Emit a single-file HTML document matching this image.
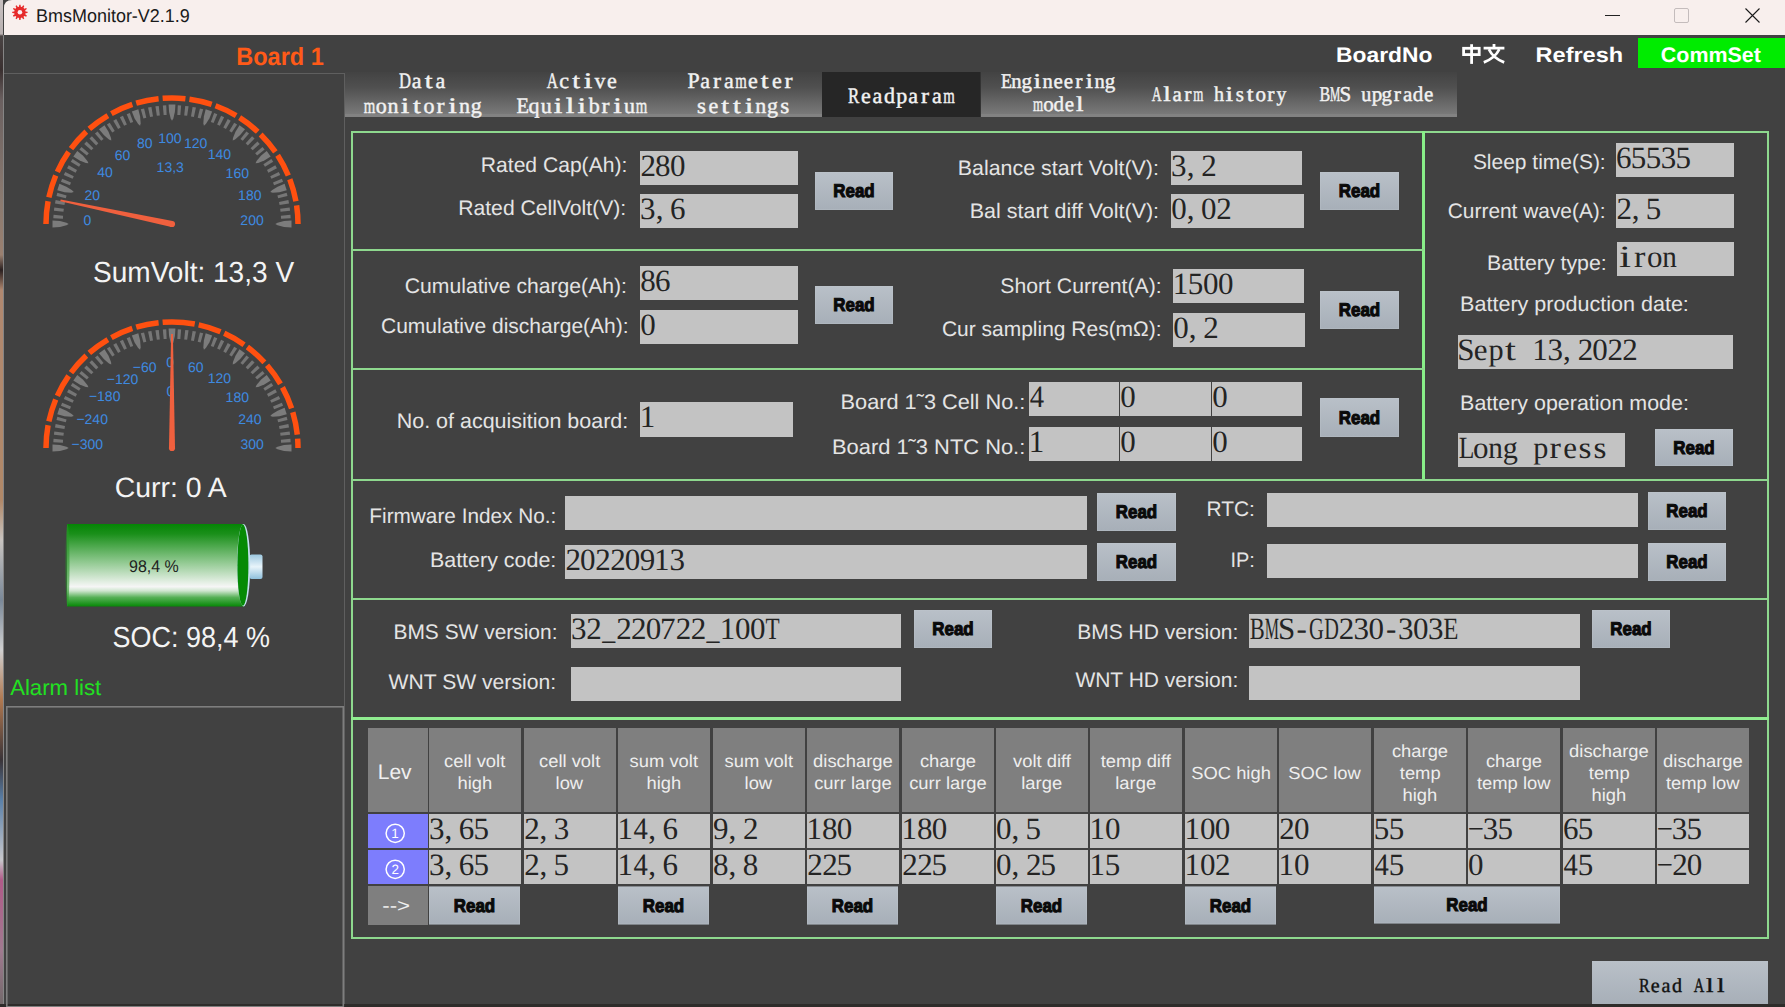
<!DOCTYPE html>
<html><head><meta charset="utf-8"><title>BmsMonitor</title>
<style>html,body{margin:0;padding:0;background:#414141;overflow:hidden}svg{display:block}</style></head>
<body><svg width="1785" height="1007" viewBox="0 0 1785 1007" text-rendering="geometricPrecision">
<defs>
<linearGradient id="tabg" x1="0" y1="0" x2="0" y2="1">
 <stop offset="0" stop-color="#434343"/><stop offset="0.35" stop-color="#505050"/><stop offset="1" stop-color="#7e7e7e"/>
</linearGradient>
<linearGradient id="btng" x1="0" y1="0" x2="0" y2="1">
 <stop offset="0" stop-color="#b9c0c8"/><stop offset="1" stop-color="#a7afb8"/>
</linearGradient>
<linearGradient id="batg" x1="0" y1="0" x2="0" y2="1">
 <stop offset="0" stop-color="#058505"/>
 <stop offset="0.12" stop-color="#1a8f1a"/>
 <stop offset="0.45" stop-color="#8cc78c"/>
 <stop offset="0.70" stop-color="#e2eee2"/>
 <stop offset="0.76" stop-color="#f6f6f6"/>
 <stop offset="0.81" stop-color="#cfe6cf"/>
 <stop offset="0.89" stop-color="#56b056"/>
 <stop offset="1" stop-color="#078807"/>
</linearGradient>
<linearGradient id="nubg" x1="0" y1="0" x2="0" y2="1">
 <stop offset="0" stop-color="#9cc8e0"/><stop offset="0.5" stop-color="#e8f4fa"/><stop offset="1" stop-color="#8fc0dc"/>
</linearGradient>
<linearGradient id="deskg" x1="0" y1="0" x2="0" y2="1">
 <stop offset="0.0000" stop-color="#c8c0c0"/> <stop offset="0.0338" stop-color="#b8b0b0"/> <stop offset="0.0357" stop-color="#4a4444"/> <stop offset="0.0695" stop-color="#3a3030"/> <stop offset="0.0993" stop-color="#6a6060"/> <stop offset="0.1986" stop-color="#8a7a70"/> <stop offset="0.2532" stop-color="#9a8070"/> <stop offset="0.2681" stop-color="#2a2020"/> <stop offset="0.2880" stop-color="#b08870"/> <stop offset="0.4965" stop-color="#b08868"/> <stop offset="0.5362" stop-color="#c8c4c0"/> <stop offset="0.5958" stop-color="#7a8898"/> <stop offset="0.6455" stop-color="#d0d0d0"/> <stop offset="0.6951" stop-color="#b07850"/> <stop offset="0.7547" stop-color="#3a3438"/> <stop offset="0.7944" stop-color="#5a80a8"/> <stop offset="0.8540" stop-color="#c8c8cc"/> <stop offset="0.8739" stop-color="#b05a88"/> <stop offset="0.9434" stop-color="#a07a90"/> <stop offset="1.0000" stop-color="#706868"/>
</linearGradient>
</defs>
<rect x="0" y="0" width="1785" height="1007" fill="#414141"/>
<rect x="0" y="0" width="3" height="1007" fill="url(#deskg)"/>
<rect x="3" y="35" width="1" height="969" fill="#858585"/>
<path d="M4 8 Q4 0 12 0 L1785 0 L1785 35 L4 35 Z" fill="#f8efed"/>
<polygon points="25.53,11.41 27.57,11.66 27.57,12.94 25.53,13.19 25.22,14.34 26.87,15.58 26.22,16.69 24.33,15.89 23.49,16.73 24.29,18.62 23.18,19.27 21.94,17.62 20.79,17.93 20.54,19.97 19.26,19.97 19.01,17.93 17.86,17.62 16.62,19.27 15.51,18.62 16.31,16.73 15.47,15.89 13.58,16.69 12.93,15.58 14.58,14.34 14.27,13.19 12.23,12.94 12.23,11.66 14.27,11.41 14.58,10.26 12.93,9.02 13.58,7.91 15.47,8.71 16.31,7.87 15.51,5.98 16.62,5.33 17.86,6.98 19.01,6.67 19.26,4.63 20.54,4.63 20.79,6.67 21.94,6.98 23.18,5.33 24.29,5.98 23.49,7.87 24.33,8.71 26.22,7.91 26.87,9.02 25.22,10.26" fill="#e62a2a"/>
<circle cx="19.9" cy="12.3" r="2.3" fill="#fbeef2"/>
<text x="36.04" y="21.80" font-family="'Liberation Sans',sans-serif" font-size="18.5" fill="#1a1a1a" textLength="153.77" lengthAdjust="spacingAndGlyphs">BmsMonitor-V2.1.9</text>
<rect x="1605" y="15" width="15" height="1" fill="#222"/>
<rect x="1674.5" y="8.5" width="14" height="14" rx="1.5" fill="none" stroke="#c4bcbc" stroke-width="1"/>
<path d="M1745.5 8.5 L1759.5 22.5 M1759.5 8.5 L1745.5 22.5" stroke="#1a1a1a" stroke-width="1.1"/>
<rect x="0" y="1004" width="1785" height="3" fill="#2e2c2a"/>
<rect x="4" y="73" width="341" height="1" fill="#5f5f5f"/>
<rect x="344" y="73" width="1" height="931" fill="#5f5f5f"/>
<rect x="6.8" y="706.8" width="336.5" height="300" fill="none" stroke="#7e7e7e" stroke-width="1.6"/>
<text x="236.25" y="64.50" font-family="'Liberation Sans',sans-serif" font-size="25" font-weight="bold" fill="#ff5a18" textLength="87.59" lengthAdjust="spacingAndGlyphs">Board 1</text>
<path d="M46 224 A126 126 0 0 1 298 224" fill="none" stroke="#ff5010" stroke-width="5.5" stroke-dasharray="22.87 4.05"/>
<polygon points="52.50,220.60 52.50,227.40 60.00,226.90 66.50,225.30 68.70,224.00 66.50,222.70 60.00,221.10" fill="#7c7c7c"/>
<polygon points="53.54,214.84 53.33,218.24 62.92,218.64 63.11,215.65" fill="#767676"/>
<polygon points="54.35,207.42 53.92,210.80 63.47,211.80 63.85,208.83" fill="#767676"/>
<polygon points="55.62,200.07 54.99,203.41 64.45,205.01 65.02,202.06" fill="#767676"/>
<polygon points="57.36,192.81 56.51,196.10 65.86,198.30 66.60,195.39" fill="#767676"/>
<polygon points="59.40,183.84 57.30,190.31 64.59,192.15 71.26,192.64 73.76,192.08 72.07,190.16 66.38,186.63" fill="#7c7c7c"/>
<polygon points="62.17,178.69 60.92,181.85 69.92,185.20 71.02,182.41" fill="#767676"/>
<polygon points="65.23,171.88 63.78,174.96 72.55,178.86 73.83,176.15" fill="#767676"/>
<polygon points="68.71,165.28 67.08,168.26 75.58,172.71 77.03,170.08" fill="#767676"/>
<polygon points="72.60,158.91 70.78,161.78 79.00,166.75 80.60,164.22" fill="#767676"/>
<polygon points="77.32,151.01 73.32,156.51 79.69,160.51 85.88,163.04 88.43,163.28 87.41,160.94 83.09,155.82" fill="#7c7c7c"/>
<polygon points="81.55,146.96 79.38,149.58 86.90,155.55 88.82,153.24" fill="#767676"/>
<polygon points="86.56,141.44 84.23,143.92 91.37,150.34 93.42,148.15" fill="#767676"/>
<polygon points="91.92,136.23 89.44,138.56 96.15,145.42 98.34,143.37" fill="#767676"/>
<polygon points="97.58,131.38 94.96,133.55 101.24,140.82 103.55,138.90" fill="#767676"/>
<polygon points="104.51,125.32 99.01,129.32 103.82,135.09 108.94,139.41 111.28,140.43 111.04,137.88 108.51,131.69" fill="#7c7c7c"/>
<polygon points="109.78,122.78 106.91,124.60 112.22,132.60 114.75,131.00" fill="#767676"/>
<polygon points="116.26,119.08 113.28,120.71 118.08,129.03 120.71,127.58" fill="#767676"/>
<polygon points="122.96,115.78 119.88,117.23 124.15,125.83 126.86,124.55" fill="#767676"/>
<polygon points="129.85,112.92 126.69,114.17 130.41,123.02 133.20,121.92" fill="#767676"/>
<polygon points="138.31,109.30 131.84,111.40 134.63,118.38 138.16,124.07 140.08,125.76 140.64,123.26 140.15,116.59" fill="#7c7c7c"/>
<polygon points="144.10,108.51 140.81,109.36 143.39,118.60 146.30,117.86" fill="#767676"/>
<polygon points="151.41,106.99 148.07,107.62 150.06,117.02 153.01,116.45" fill="#767676"/>
<polygon points="158.80,105.92 155.42,106.35 156.83,115.85 159.80,115.47" fill="#767676"/>
<polygon points="166.24,105.33 162.84,105.54 163.65,115.11 166.64,114.92" fill="#767676"/>
<polygon points="175.40,104.50 168.60,104.50 169.10,112.00 170.70,118.50 172.00,120.70 173.30,118.50 174.90,112.00" fill="#7c7c7c"/>
<polygon points="181.16,105.54 177.76,105.33 177.36,114.92 180.35,115.11" fill="#767676"/>
<polygon points="188.58,106.35 185.20,105.92 184.20,115.47 187.17,115.85" fill="#767676"/>
<polygon points="195.93,107.62 192.59,106.99 190.99,116.45 193.94,117.02" fill="#767676"/>
<polygon points="203.19,109.36 199.90,108.51 197.70,117.86 200.61,118.60" fill="#767676"/>
<polygon points="212.16,111.40 205.69,109.30 203.85,116.59 203.36,123.26 203.92,125.76 205.84,124.07 209.37,118.38" fill="#7c7c7c"/>
<polygon points="217.31,114.17 214.15,112.92 210.80,121.92 213.59,123.02" fill="#767676"/>
<polygon points="224.12,117.23 221.04,115.78 217.14,124.55 219.85,125.83" fill="#767676"/>
<polygon points="230.72,120.71 227.74,119.08 223.29,127.58 225.92,129.03" fill="#767676"/>
<polygon points="237.09,124.60 234.22,122.78 229.25,131.00 231.78,132.60" fill="#767676"/>
<polygon points="244.99,129.32 239.49,125.32 235.49,131.69 232.96,137.88 232.72,140.43 235.06,139.41 240.18,135.09" fill="#7c7c7c"/>
<polygon points="249.04,133.55 246.42,131.38 240.45,138.90 242.76,140.82" fill="#767676"/>
<polygon points="254.56,138.56 252.08,136.23 245.66,143.37 247.85,145.42" fill="#767676"/>
<polygon points="259.77,143.92 257.44,141.44 250.58,148.15 252.63,150.34" fill="#767676"/>
<polygon points="264.62,149.58 262.45,146.96 255.18,153.24 257.10,155.55" fill="#767676"/>
<polygon points="270.68,156.51 266.68,151.01 260.91,155.82 256.59,160.94 255.57,163.28 258.12,163.04 264.31,160.51" fill="#7c7c7c"/>
<polygon points="273.22,161.78 271.40,158.91 263.40,164.22 265.00,166.75" fill="#767676"/>
<polygon points="276.92,168.26 275.29,165.28 266.97,170.08 268.42,172.71" fill="#767676"/>
<polygon points="280.22,174.96 278.77,171.88 270.17,176.15 271.45,178.86" fill="#767676"/>
<polygon points="283.08,181.85 281.83,178.69 272.98,182.41 274.08,185.20" fill="#767676"/>
<polygon points="286.70,190.31 284.60,183.84 277.62,186.63 271.93,190.16 270.24,192.08 272.74,192.64 279.41,192.15" fill="#7c7c7c"/>
<polygon points="287.49,196.10 286.64,192.81 277.40,195.39 278.14,198.30" fill="#767676"/>
<polygon points="289.01,203.41 288.38,200.07 278.98,202.06 279.55,205.01" fill="#767676"/>
<polygon points="290.08,210.80 289.65,207.42 280.15,208.83 280.53,211.80" fill="#767676"/>
<polygon points="290.67,218.24 290.46,214.84 280.89,215.65 281.08,218.64" fill="#767676"/>
<polygon points="291.50,227.40 291.50,220.60 284.00,221.10 277.50,222.70 275.30,224.00 277.50,225.30 284.00,226.90" fill="#7c7c7c"/>
<text x="83.53" y="225.10" font-family="'Liberation Sans',sans-serif" font-size="14" fill="#3e8ae0" textLength="7.79" lengthAdjust="spacingAndGlyphs">0</text>
<text x="84.42" y="200.00" font-family="'Liberation Sans',sans-serif" font-size="14" fill="#3e8ae0" textLength="15.57" lengthAdjust="spacingAndGlyphs">20</text>
<text x="97.17" y="177.40" font-family="'Liberation Sans',sans-serif" font-size="14" fill="#3e8ae0" textLength="15.57" lengthAdjust="spacingAndGlyphs">40</text>
<text x="114.83" y="159.60" font-family="'Liberation Sans',sans-serif" font-size="14" fill="#3e8ae0" textLength="15.57" lengthAdjust="spacingAndGlyphs">60</text>
<text x="137.05" y="147.70" font-family="'Liberation Sans',sans-serif" font-size="14" fill="#3e8ae0" textLength="15.57" lengthAdjust="spacingAndGlyphs">80</text>
<text x="158.22" y="142.70" font-family="'Liberation Sans',sans-serif" font-size="14" fill="#3e8ae0" textLength="23.36" lengthAdjust="spacingAndGlyphs">100</text>
<text x="183.93" y="147.60" font-family="'Liberation Sans',sans-serif" font-size="14" fill="#3e8ae0" textLength="23.36" lengthAdjust="spacingAndGlyphs">120</text>
<text x="207.72" y="159.20" font-family="'Liberation Sans',sans-serif" font-size="14" fill="#3e8ae0" textLength="23.36" lengthAdjust="spacingAndGlyphs">140</text>
<text x="225.62" y="178.20" font-family="'Liberation Sans',sans-serif" font-size="14" fill="#3e8ae0" textLength="23.36" lengthAdjust="spacingAndGlyphs">160</text>
<text x="238.12" y="200.20" font-family="'Liberation Sans',sans-serif" font-size="14" fill="#3e8ae0" textLength="23.36" lengthAdjust="spacingAndGlyphs">180</text>
<text x="240.35" y="225.35" font-family="'Liberation Sans',sans-serif" font-size="14" fill="#3e8ae0" textLength="23.36" lengthAdjust="spacingAndGlyphs">200</text>
<text x="156.62" y="171.50" font-family="'Liberation Sans',sans-serif" font-size="14" fill="#3e8ae0" textLength="27.25" lengthAdjust="spacingAndGlyphs">13,3</text>
<path d="M172.62 221.07 L60.67 199.48 L60.29 201.24 L171.38 226.93 Z" fill="#f0603e"/>
<circle cx="172" cy="224" r="3.1" fill="#f0603e"/>
<path d="M46 448 A126 126 0 0 1 172 322" fill="none" stroke="#ff5010" stroke-width="5.5" stroke-dasharray="22.87 4.05"/>
<path d="M172 322 A126 126 0 0 1 298 448" fill="none" stroke="#ff5010" stroke-width="5.5" stroke-dasharray="22.87 4.05"/>
<polygon points="52.50,444.60 52.50,451.40 60.00,450.90 66.50,449.30 68.70,448.00 66.50,446.70 60.00,445.10" fill="#7c7c7c"/>
<polygon points="53.54,438.84 53.33,442.24 62.92,442.64 63.11,439.65" fill="#767676"/>
<polygon points="54.35,431.42 53.92,434.80 63.47,435.80 63.85,432.83" fill="#767676"/>
<polygon points="55.62,424.07 54.99,427.41 64.45,429.01 65.02,426.06" fill="#767676"/>
<polygon points="57.36,416.81 56.51,420.10 65.86,422.30 66.60,419.39" fill="#767676"/>
<polygon points="59.40,407.84 57.30,414.31 64.59,416.15 71.26,416.64 73.76,416.08 72.07,414.16 66.38,410.63" fill="#7c7c7c"/>
<polygon points="62.17,402.69 60.92,405.85 69.92,409.20 71.02,406.41" fill="#767676"/>
<polygon points="65.23,395.88 63.78,398.96 72.55,402.86 73.83,400.15" fill="#767676"/>
<polygon points="68.71,389.28 67.08,392.26 75.58,396.71 77.03,394.08" fill="#767676"/>
<polygon points="72.60,382.91 70.78,385.78 79.00,390.75 80.60,388.22" fill="#767676"/>
<polygon points="77.32,375.01 73.32,380.51 79.69,384.51 85.88,387.04 88.43,387.28 87.41,384.94 83.09,379.82" fill="#7c7c7c"/>
<polygon points="81.55,370.96 79.38,373.58 86.90,379.55 88.82,377.24" fill="#767676"/>
<polygon points="86.56,365.44 84.23,367.92 91.37,374.34 93.42,372.15" fill="#767676"/>
<polygon points="91.92,360.23 89.44,362.56 96.15,369.42 98.34,367.37" fill="#767676"/>
<polygon points="97.58,355.38 94.96,357.55 101.24,364.82 103.55,362.90" fill="#767676"/>
<polygon points="104.51,349.32 99.01,353.32 103.82,359.09 108.94,363.41 111.28,364.43 111.04,361.88 108.51,355.69" fill="#7c7c7c"/>
<polygon points="109.78,346.78 106.91,348.60 112.22,356.60 114.75,355.00" fill="#767676"/>
<polygon points="116.26,343.08 113.28,344.71 118.08,353.03 120.71,351.58" fill="#767676"/>
<polygon points="122.96,339.78 119.88,341.23 124.15,349.83 126.86,348.55" fill="#767676"/>
<polygon points="129.85,336.92 126.69,338.17 130.41,347.02 133.20,345.92" fill="#767676"/>
<polygon points="138.31,333.30 131.84,335.40 134.63,342.38 138.16,348.07 140.08,349.76 140.64,347.26 140.15,340.59" fill="#7c7c7c"/>
<polygon points="144.10,332.51 140.81,333.36 143.39,342.60 146.30,341.86" fill="#767676"/>
<polygon points="151.41,330.99 148.07,331.62 150.06,341.02 153.01,340.45" fill="#767676"/>
<polygon points="158.80,329.92 155.42,330.35 156.83,339.85 159.80,339.47" fill="#767676"/>
<polygon points="166.24,329.33 162.84,329.54 163.65,339.11 166.64,338.92" fill="#767676"/>
<polygon points="175.40,328.50 168.60,328.50 169.10,336.00 170.70,342.50 172.00,344.70 173.30,342.50 174.90,336.00" fill="#7c7c7c"/>
<polygon points="181.16,329.54 177.76,329.33 177.36,338.92 180.35,339.11" fill="#767676"/>
<polygon points="188.58,330.35 185.20,329.92 184.20,339.47 187.17,339.85" fill="#767676"/>
<polygon points="195.93,331.62 192.59,330.99 190.99,340.45 193.94,341.02" fill="#767676"/>
<polygon points="203.19,333.36 199.90,332.51 197.70,341.86 200.61,342.60" fill="#767676"/>
<polygon points="212.16,335.40 205.69,333.30 203.85,340.59 203.36,347.26 203.92,349.76 205.84,348.07 209.37,342.38" fill="#7c7c7c"/>
<polygon points="217.31,338.17 214.15,336.92 210.80,345.92 213.59,347.02" fill="#767676"/>
<polygon points="224.12,341.23 221.04,339.78 217.14,348.55 219.85,349.83" fill="#767676"/>
<polygon points="230.72,344.71 227.74,343.08 223.29,351.58 225.92,353.03" fill="#767676"/>
<polygon points="237.09,348.60 234.22,346.78 229.25,355.00 231.78,356.60" fill="#767676"/>
<polygon points="244.99,353.32 239.49,349.32 235.49,355.69 232.96,361.88 232.72,364.43 235.06,363.41 240.18,359.09" fill="#7c7c7c"/>
<polygon points="249.04,357.55 246.42,355.38 240.45,362.90 242.76,364.82" fill="#767676"/>
<polygon points="254.56,362.56 252.08,360.23 245.66,367.37 247.85,369.42" fill="#767676"/>
<polygon points="259.77,367.92 257.44,365.44 250.58,372.15 252.63,374.34" fill="#767676"/>
<polygon points="264.62,373.58 262.45,370.96 255.18,377.24 257.10,379.55" fill="#767676"/>
<polygon points="270.68,380.51 266.68,375.01 260.91,379.82 256.59,384.94 255.57,387.28 258.12,387.04 264.31,384.51" fill="#7c7c7c"/>
<polygon points="273.22,385.78 271.40,382.91 263.40,388.22 265.00,390.75" fill="#767676"/>
<polygon points="276.92,392.26 275.29,389.28 266.97,394.08 268.42,396.71" fill="#767676"/>
<polygon points="280.22,398.96 278.77,395.88 270.17,400.15 271.45,402.86" fill="#767676"/>
<polygon points="283.08,405.85 281.83,402.69 272.98,406.41 274.08,409.20" fill="#767676"/>
<polygon points="286.70,414.31 284.60,407.84 277.62,410.63 271.93,414.16 270.24,416.08 272.74,416.64 279.41,416.15" fill="#7c7c7c"/>
<polygon points="287.49,420.10 286.64,416.81 277.40,419.39 278.14,422.30" fill="#767676"/>
<polygon points="289.01,427.41 288.38,424.07 278.98,426.06 279.55,429.01" fill="#767676"/>
<polygon points="290.08,434.80 289.65,431.42 280.15,432.83 280.53,435.80" fill="#767676"/>
<polygon points="290.67,442.24 290.46,438.84 280.89,439.65 281.08,442.64" fill="#767676"/>
<polygon points="291.50,451.40 291.50,444.60 284.00,445.10 277.50,446.70 275.30,448.00 277.50,449.30 284.00,450.90" fill="#7c7c7c"/>
<text x="71.53" y="449.10" font-family="'Liberation Sans',sans-serif" font-size="14" fill="#3e8ae0" textLength="31.53" lengthAdjust="spacingAndGlyphs">−300</text>
<text x="76.42" y="424.00" font-family="'Liberation Sans',sans-serif" font-size="14" fill="#3e8ae0" textLength="31.53" lengthAdjust="spacingAndGlyphs">−240</text>
<text x="88.92" y="401.40" font-family="'Liberation Sans',sans-serif" font-size="14" fill="#3e8ae0" textLength="31.53" lengthAdjust="spacingAndGlyphs">−180</text>
<text x="106.83" y="383.60" font-family="'Liberation Sans',sans-serif" font-size="14" fill="#3e8ae0" textLength="31.53" lengthAdjust="spacingAndGlyphs">−120</text>
<text x="132.80" y="371.70" font-family="'Liberation Sans',sans-serif" font-size="14" fill="#3e8ae0" textLength="23.75" lengthAdjust="spacingAndGlyphs">−60</text>
<text x="166.22" y="366.70" font-family="'Liberation Sans',sans-serif" font-size="14" fill="#3e8ae0" textLength="7.79" lengthAdjust="spacingAndGlyphs">0</text>
<text x="187.93" y="371.60" font-family="'Liberation Sans',sans-serif" font-size="14" fill="#3e8ae0" textLength="15.57" lengthAdjust="spacingAndGlyphs">60</text>
<text x="207.72" y="383.20" font-family="'Liberation Sans',sans-serif" font-size="14" fill="#3e8ae0" textLength="23.36" lengthAdjust="spacingAndGlyphs">120</text>
<text x="225.62" y="402.20" font-family="'Liberation Sans',sans-serif" font-size="14" fill="#3e8ae0" textLength="23.36" lengthAdjust="spacingAndGlyphs">180</text>
<text x="238.25" y="424.20" font-family="'Liberation Sans',sans-serif" font-size="14" fill="#3e8ae0" textLength="23.36" lengthAdjust="spacingAndGlyphs">240</text>
<text x="240.47" y="449.35" font-family="'Liberation Sans',sans-serif" font-size="14" fill="#3e8ae0" textLength="23.36" lengthAdjust="spacingAndGlyphs">300</text>
<text x="166.62" y="395.60" font-family="'Liberation Sans',sans-serif" font-size="14" fill="#3e8ae0" textLength="7.79" lengthAdjust="spacingAndGlyphs">0</text>
<path d="M175.00 448.00 L172.90 334.00 L171.10 334.00 L169.00 448.00 Z" fill="#f0603e"/>
<circle cx="172" cy="448" r="3.1" fill="#f0603e"/>
<text x="92.99" y="282.20" font-family="'Liberation Sans',sans-serif" font-size="29" fill="#f4f4f4" textLength="201.12" lengthAdjust="spacingAndGlyphs">SumVolt: 13,3 V</text>
<text x="114.78" y="497.00" font-family="'Liberation Sans',sans-serif" font-size="28" fill="#f4f4f4" textLength="111.97" lengthAdjust="spacingAndGlyphs">Curr: 0 A</text>
<rect x="67" y="524" width="177" height="82.5" fill="url(#batg)"/>
<ellipse cx="67.5" cy="565.2" rx="2" ry="41.2" fill="#2a962a" opacity="0.6"/>
<rect x="249.5" y="554.5" width="13" height="24.5" rx="2" fill="url(#nubg)"/>
<ellipse cx="243.6" cy="565.2" rx="6.6" ry="41.3" fill="#c4e2f0"/>
<ellipse cx="242.9" cy="565.2" rx="5.5" ry="40.6" fill="#058a05"/>
<text x="129.00" y="571.50" font-family="'Liberation Sans',sans-serif" font-size="17" fill="#1e1e1e" textLength="49.74" lengthAdjust="spacingAndGlyphs">98,4 %</text>
<text x="112.54" y="646.90" font-family="'Liberation Sans',sans-serif" font-size="29" fill="#f4f4f4" textLength="157.39" lengthAdjust="spacingAndGlyphs">SOC: 98,4 %</text>
<text x="10.20" y="695.30" font-family="'Liberation Sans',sans-serif" font-size="22" fill="#22e022" textLength="91.00" lengthAdjust="spacingAndGlyphs">Alarm list</text>
<text x="1336.14" y="61.60" font-family="'Liberation Sans',sans-serif" font-size="21" font-weight="bold" fill="#ffffff" textLength="96.25" lengthAdjust="spacingAndGlyphs">BoardNo</text>
<g stroke="#ffffff" stroke-width="2.8" fill="none" stroke-linecap="butt"><rect x="1463.6" y="48.3" width="15.6" height="6.3"/><path d="M1471.6 44.2 V63.9"/><path d="M1494 44 V48 M1483.6 48.1 H1504.4 M1489 49.5 Q1493 58 1504.2 62.4 M1499.2 49.5 Q1495 58 1483.8 62.4"/></g>
<text x="1535.60" y="62.00" font-family="'Liberation Sans',sans-serif" font-size="21" font-weight="bold" fill="#ffffff" textLength="87.52" lengthAdjust="spacingAndGlyphs">Refresh</text>
<rect x="1638" y="38" width="147" height="30" fill="#00ec00"/>
<text x="1660.83" y="62.00" font-family="'Liberation Sans',sans-serif" font-size="21" font-weight="bold" fill="#ffffff" textLength="100.04" lengthAdjust="spacingAndGlyphs">CommSet</text>
<rect x="345" y="72" width="1112" height="45" fill="url(#tabg)"/>
<rect x="345" y="114" width="1112" height="3" fill="#828282"/>
<rect x="822" y="72" width="158" height="45" fill="#262626"/>
<rect x="980" y="72" width="1" height="45" fill="#333333"/>
<g stroke="#f2f2f2" stroke-width="0.45"><text x="399.10" y="87.70" font-family="'Liberation Serif',serif" font-size="22" fill="#f2f2f2" textLength="12.00" lengthAdjust="spacingAndGlyphs">D</text><text x="411.72" y="87.70" font-family="'Liberation Serif',serif" font-size="22" fill="#f2f2f2">a</text><text x="424.74" y="87.70" font-family="'Liberation Serif',serif" font-size="22" fill="#f2f2f2" textLength="7.84" lengthAdjust="spacingAndGlyphs">t</text><text x="435.52" y="87.70" font-family="'Liberation Serif',serif" font-size="22" fill="#f2f2f2">a</text></g>
<g stroke="#f2f2f2" stroke-width="0.45"><text x="363.64" y="113.00" font-family="'Liberation Serif',serif" font-size="22" fill="#f2f2f2" textLength="11.53" lengthAdjust="spacingAndGlyphs">m</text><text x="375.85" y="113.00" font-family="'Liberation Serif',serif" font-size="22" fill="#f2f2f2">o</text><text x="387.62" y="113.00" font-family="'Liberation Serif',serif" font-size="22" fill="#f2f2f2">n</text><text x="400.76" y="113.00" font-family="'Liberation Serif',serif" font-size="22" fill="#f2f2f2" textLength="8.59" lengthAdjust="spacingAndGlyphs">i</text><text x="413.04" y="113.00" font-family="'Liberation Serif',serif" font-size="22" fill="#f2f2f2" textLength="7.84" lengthAdjust="spacingAndGlyphs">t</text><text x="423.45" y="113.00" font-family="'Liberation Serif',serif" font-size="22" fill="#f2f2f2">o</text><text x="436.61" y="113.00" font-family="'Liberation Serif',serif" font-size="22" fill="#f2f2f2" textLength="8.01" lengthAdjust="spacingAndGlyphs">r</text><text x="448.36" y="113.00" font-family="'Liberation Serif',serif" font-size="22" fill="#f2f2f2" textLength="8.59" lengthAdjust="spacingAndGlyphs">i</text><text x="459.02" y="113.00" font-family="'Liberation Serif',serif" font-size="22" fill="#f2f2f2">n</text><text x="470.80" y="113.00" font-family="'Liberation Serif',serif" font-size="22" fill="#f2f2f2">g</text></g>
<g stroke="#f2f2f2" stroke-width="0.45"><text x="546.80" y="87.50" font-family="'Liberation Serif',serif" font-size="22" fill="#f2f2f2" textLength="11.22" lengthAdjust="spacingAndGlyphs">A</text><text x="559.35" y="87.50" font-family="'Liberation Serif',serif" font-size="22" fill="#f2f2f2">c</text><text x="572.24" y="87.50" font-family="'Liberation Serif',serif" font-size="22" fill="#f2f2f2" textLength="7.84" lengthAdjust="spacingAndGlyphs">t</text><text x="583.76" y="87.50" font-family="'Liberation Serif',serif" font-size="22" fill="#f2f2f2" textLength="8.59" lengthAdjust="spacingAndGlyphs">i</text><text x="594.58" y="87.50" font-family="'Liberation Serif',serif" font-size="22" fill="#f2f2f2" textLength="10.95" lengthAdjust="spacingAndGlyphs">v</text><text x="607.08" y="87.50" font-family="'Liberation Serif',serif" font-size="22" fill="#f2f2f2">e</text></g>
<g stroke="#f2f2f2" stroke-width="0.45"><text x="516.51" y="113.00" font-family="'Liberation Serif',serif" font-size="22" fill="#f2f2f2" textLength="12.52" lengthAdjust="spacingAndGlyphs">E</text><text x="528.60" y="113.00" font-family="'Liberation Serif',serif" font-size="22" fill="#f2f2f2">q</text><text x="540.75" y="113.00" font-family="'Liberation Serif',serif" font-size="22" fill="#f2f2f2">u</text><text x="553.76" y="113.00" font-family="'Liberation Serif',serif" font-size="22" fill="#f2f2f2" textLength="8.59" lengthAdjust="spacingAndGlyphs">i</text><text x="565.66" y="113.00" font-family="'Liberation Serif',serif" font-size="22" fill="#f2f2f2" textLength="8.59" lengthAdjust="spacingAndGlyphs">l</text><text x="577.56" y="113.00" font-family="'Liberation Serif',serif" font-size="22" fill="#f2f2f2" textLength="8.59" lengthAdjust="spacingAndGlyphs">i</text><text x="588.73" y="113.00" font-family="'Liberation Serif',serif" font-size="22" fill="#f2f2f2">b</text><text x="601.51" y="113.00" font-family="'Liberation Serif',serif" font-size="22" fill="#f2f2f2" textLength="8.01" lengthAdjust="spacingAndGlyphs">r</text><text x="613.26" y="113.00" font-family="'Liberation Serif',serif" font-size="22" fill="#f2f2f2" textLength="8.59" lengthAdjust="spacingAndGlyphs">i</text><text x="624.05" y="113.00" font-family="'Liberation Serif',serif" font-size="22" fill="#f2f2f2">u</text><text x="635.64" y="113.00" font-family="'Liberation Serif',serif" font-size="22" fill="#f2f2f2" textLength="11.53" lengthAdjust="spacingAndGlyphs">m</text></g>
<g stroke="#f2f2f2" stroke-width="0.45"><text x="687.48" y="87.50" font-family="'Liberation Serif',serif" font-size="22" fill="#f2f2f2" textLength="12.18" lengthAdjust="spacingAndGlyphs">P</text><text x="700.23" y="87.50" font-family="'Liberation Serif',serif" font-size="22" fill="#f2f2f2">a</text><text x="713.01" y="87.50" font-family="'Liberation Serif',serif" font-size="22" fill="#f2f2f2" textLength="8.01" lengthAdjust="spacingAndGlyphs">r</text><text x="724.03" y="87.50" font-family="'Liberation Serif',serif" font-size="22" fill="#f2f2f2">a</text><text x="735.24" y="87.50" font-family="'Liberation Serif',serif" font-size="22" fill="#f2f2f2" textLength="11.53" lengthAdjust="spacingAndGlyphs">m</text><text x="748.08" y="87.50" font-family="'Liberation Serif',serif" font-size="22" fill="#f2f2f2">e</text><text x="760.84" y="87.50" font-family="'Liberation Serif',serif" font-size="22" fill="#f2f2f2" textLength="7.84" lengthAdjust="spacingAndGlyphs">t</text><text x="771.88" y="87.50" font-family="'Liberation Serif',serif" font-size="22" fill="#f2f2f2">e</text><text x="784.41" y="87.50" font-family="'Liberation Serif',serif" font-size="22" fill="#f2f2f2" textLength="8.01" lengthAdjust="spacingAndGlyphs">r</text></g>
<g stroke="#f2f2f2" stroke-width="0.45"><text x="696.97" y="113.00" font-family="'Liberation Serif',serif" font-size="22" fill="#f2f2f2" textLength="9.02" lengthAdjust="spacingAndGlyphs">s</text><text x="708.48" y="113.00" font-family="'Liberation Serif',serif" font-size="22" fill="#f2f2f2">e</text><text x="721.24" y="113.00" font-family="'Liberation Serif',serif" font-size="22" fill="#f2f2f2" textLength="7.84" lengthAdjust="spacingAndGlyphs">t</text><text x="733.14" y="113.00" font-family="'Liberation Serif',serif" font-size="22" fill="#f2f2f2" textLength="7.84" lengthAdjust="spacingAndGlyphs">t</text><text x="744.66" y="113.00" font-family="'Liberation Serif',serif" font-size="22" fill="#f2f2f2" textLength="8.59" lengthAdjust="spacingAndGlyphs">i</text><text x="755.33" y="113.00" font-family="'Liberation Serif',serif" font-size="22" fill="#f2f2f2">n</text><text x="767.10" y="113.00" font-family="'Liberation Serif',serif" font-size="22" fill="#f2f2f2">g</text><text x="780.27" y="113.00" font-family="'Liberation Serif',serif" font-size="22" fill="#f2f2f2" textLength="9.02" lengthAdjust="spacingAndGlyphs">s</text></g>
<g stroke="#f2f2f2" stroke-width="0.45"><text x="848.09" y="102.60" font-family="'Liberation Serif',serif" font-size="22" fill="#f2f2f2" textLength="11.28" lengthAdjust="spacingAndGlyphs">R</text><text x="860.98" y="102.60" font-family="'Liberation Serif',serif" font-size="22" fill="#f2f2f2">e</text><text x="872.62" y="102.60" font-family="'Liberation Serif',serif" font-size="22" fill="#f2f2f2">a</text><text x="883.90" y="102.60" font-family="'Liberation Serif',serif" font-size="22" fill="#f2f2f2">d</text><text x="896.30" y="102.60" font-family="'Liberation Serif',serif" font-size="22" fill="#f2f2f2">p</text><text x="908.33" y="102.60" font-family="'Liberation Serif',serif" font-size="22" fill="#f2f2f2">a</text><text x="921.11" y="102.60" font-family="'Liberation Serif',serif" font-size="22" fill="#f2f2f2" textLength="8.01" lengthAdjust="spacingAndGlyphs">r</text><text x="932.12" y="102.60" font-family="'Liberation Serif',serif" font-size="22" fill="#f2f2f2">a</text><text x="943.34" y="102.60" font-family="'Liberation Serif',serif" font-size="22" fill="#f2f2f2" textLength="11.53" lengthAdjust="spacingAndGlyphs">m</text></g>
<g stroke="#f2f2f2" stroke-width="0.45"><text x="1000.99" y="87.90" font-family="'Liberation Serif',serif" font-size="21" fill="#f2f2f2" textLength="10.91" lengthAdjust="spacingAndGlyphs">E</text><text x="1011.33" y="87.90" font-family="'Liberation Serif',serif" font-size="21" fill="#f2f2f2" textLength="10.30" lengthAdjust="spacingAndGlyphs">n</text><text x="1021.50" y="87.90" font-family="'Liberation Serif',serif" font-size="21" fill="#f2f2f2">g</text><text x="1033.53" y="87.90" font-family="'Liberation Serif',serif" font-size="21" fill="#f2f2f2" textLength="7.53" lengthAdjust="spacingAndGlyphs">i</text><text x="1042.53" y="87.90" font-family="'Liberation Serif',serif" font-size="21" fill="#f2f2f2" textLength="10.30" lengthAdjust="spacingAndGlyphs">n</text><text x="1053.45" y="87.90" font-family="'Liberation Serif',serif" font-size="21" fill="#f2f2f2">e</text><text x="1063.85" y="87.90" font-family="'Liberation Serif',serif" font-size="21" fill="#f2f2f2">e</text><text x="1075.26" y="87.90" font-family="'Liberation Serif',serif" font-size="21" fill="#f2f2f2" textLength="7.21" lengthAdjust="spacingAndGlyphs">r</text><text x="1085.53" y="87.90" font-family="'Liberation Serif',serif" font-size="21" fill="#f2f2f2" textLength="7.53" lengthAdjust="spacingAndGlyphs">i</text><text x="1094.53" y="87.90" font-family="'Liberation Serif',serif" font-size="21" fill="#f2f2f2" textLength="10.30" lengthAdjust="spacingAndGlyphs">n</text><text x="1104.70" y="87.90" font-family="'Liberation Serif',serif" font-size="21" fill="#f2f2f2">g</text></g>
<g stroke="#f2f2f2" stroke-width="0.45"><text x="1033.11" y="111.10" font-family="'Liberation Serif',serif" font-size="21" fill="#f2f2f2" textLength="10.08" lengthAdjust="spacingAndGlyphs">m</text><text x="1043.35" y="111.10" font-family="'Liberation Serif',serif" font-size="21" fill="#f2f2f2">o</text><text x="1053.50" y="111.10" font-family="'Liberation Serif',serif" font-size="21" fill="#f2f2f2">d</text><text x="1064.65" y="111.10" font-family="'Liberation Serif',serif" font-size="21" fill="#f2f2f2">e</text><text x="1075.93" y="111.10" font-family="'Liberation Serif',serif" font-size="21" fill="#f2f2f2" textLength="7.53" lengthAdjust="spacingAndGlyphs">l</text></g>
<g stroke="#f2f2f2" stroke-width="0.45"><text x="1151.75" y="101.00" font-family="'Liberation Serif',serif" font-size="21" fill="#f2f2f2" textLength="9.84" lengthAdjust="spacingAndGlyphs">A</text><text x="1163.23" y="101.00" font-family="'Liberation Serif',serif" font-size="21" fill="#f2f2f2" textLength="7.53" lengthAdjust="spacingAndGlyphs">l</text><text x="1172.62" y="101.00" font-family="'Liberation Serif',serif" font-size="21" fill="#f2f2f2">a</text><text x="1184.16" y="101.00" font-family="'Liberation Serif',serif" font-size="21" fill="#f2f2f2" textLength="7.21" lengthAdjust="spacingAndGlyphs">r</text><text x="1193.21" y="101.00" font-family="'Liberation Serif',serif" font-size="21" fill="#f2f2f2" textLength="10.08" lengthAdjust="spacingAndGlyphs">m</text><text x="1214.08" y="101.00" font-family="'Liberation Serif',serif" font-size="21" fill="#f2f2f2" textLength="10.05" lengthAdjust="spacingAndGlyphs">h</text><text x="1225.63" y="101.00" font-family="'Liberation Serif',serif" font-size="21" fill="#f2f2f2" textLength="7.53" lengthAdjust="spacingAndGlyphs">i</text><text x="1235.78" y="101.00" font-family="'Liberation Serif',serif" font-size="21" fill="#f2f2f2">s</text><text x="1246.78" y="101.00" font-family="'Liberation Serif',serif" font-size="21" fill="#f2f2f2" textLength="6.84" lengthAdjust="spacingAndGlyphs">t</text><text x="1255.45" y="101.00" font-family="'Liberation Serif',serif" font-size="21" fill="#f2f2f2">o</text><text x="1267.36" y="101.00" font-family="'Liberation Serif',serif" font-size="21" fill="#f2f2f2" textLength="7.21" lengthAdjust="spacingAndGlyphs">r</text><text x="1276.48" y="101.00" font-family="'Liberation Serif',serif" font-size="21" fill="#f2f2f2" textLength="9.80" lengthAdjust="spacingAndGlyphs">y</text></g>
<g stroke="#f2f2f2" stroke-width="0.45"><text x="1319.53" y="101.00" font-family="'Liberation Serif',serif" font-size="21" fill="#f2f2f2" textLength="10.72" lengthAdjust="spacingAndGlyphs">B</text><text x="1330.04" y="101.00" font-family="'Liberation Serif',serif" font-size="21" fill="#f2f2f2" textLength="10.21" lengthAdjust="spacingAndGlyphs">M</text><text x="1339.62" y="101.00" font-family="'Liberation Serif',serif" font-size="21" fill="#f2f2f2">S</text><text x="1361.28" y="101.00" font-family="'Liberation Serif',serif" font-size="21" fill="#f2f2f2" textLength="10.05" lengthAdjust="spacingAndGlyphs">u</text><text x="1371.70" y="101.00" font-family="'Liberation Serif',serif" font-size="21" fill="#f2f2f2">p</text><text x="1381.60" y="101.00" font-family="'Liberation Serif',serif" font-size="21" fill="#f2f2f2">g</text><text x="1393.76" y="101.00" font-family="'Liberation Serif',serif" font-size="21" fill="#f2f2f2" textLength="7.21" lengthAdjust="spacingAndGlyphs">r</text><text x="1403.03" y="101.00" font-family="'Liberation Serif',serif" font-size="21" fill="#f2f2f2">a</text><text x="1412.80" y="101.00" font-family="'Liberation Serif',serif" font-size="21" fill="#f2f2f2">d</text><text x="1423.95" y="101.00" font-family="'Liberation Serif',serif" font-size="21" fill="#f2f2f2">e</text></g>
<rect x="351" y="131" width="1418" height="2" fill="#8ed88e"/>
<rect x="351" y="131" width="2" height="808" fill="#8ed88e"/>
<rect x="1767" y="131" width="2" height="808" fill="#8ed88e"/>
<rect x="1422" y="131" width="3" height="350" fill="#88ee88"/>
<rect x="351" y="249" width="1073" height="2" fill="#8ed88e"/>
<rect x="351" y="368" width="1073" height="2" fill="#8ed88e"/>
<rect x="351" y="479" width="1418" height="2" fill="#8ed88e"/>
<rect x="351" y="598" width="1418" height="2" fill="#8ed88e"/>
<rect x="351" y="717" width="1418" height="3" fill="#90ec90"/>
<rect x="351" y="937" width="1418" height="2" fill="#8ed88e"/>
<text x="480.84" y="171.60" font-family="'Liberation Sans',sans-serif" font-size="21" fill="#e4e4e4" textLength="146.47" lengthAdjust="spacingAndGlyphs">Rated Cap(Ah):</text>
<text x="458.24" y="214.80" font-family="'Liberation Sans',sans-serif" font-size="21" fill="#e4e4e4" textLength="167.98" lengthAdjust="spacingAndGlyphs">Rated CellVolt(V):</text>
<rect x="640" y="151" width="158" height="34" fill="#c3c3c3"/><text x="640.45" y="176.40" font-family="'Liberation Serif',serif" font-size="31" fill="#242424">2</text><text x="655.10" y="176.40" font-family="'Liberation Serif',serif" font-size="31" fill="#242424">8</text><text x="670.00" y="176.40" font-family="'Liberation Serif',serif" font-size="31" fill="#242424">0</text>
<rect x="640" y="194" width="158" height="34" fill="#c3c3c3"/><text x="640.08" y="219.40" font-family="'Liberation Serif',serif" font-size="31" fill="#242424">3</text><text x="655.65" y="219.40" font-family="'Liberation Serif',serif" font-size="31" fill="#242424">,</text><text x="669.88" y="219.40" font-family="'Liberation Serif',serif" font-size="31" fill="#242424">6</text>
<rect x="815" y="172" width="78" height="38" fill="url(#btng)"/><rect x="815.5" y="172.5" width="77" height="37" fill="none" stroke="#c0c7ce" stroke-width="1" opacity="0.3"/><text x="833.36" y="197.40" font-family="'Liberation Sans',sans-serif" font-size="18.5" font-weight="bold" fill="#0a0a0a" textLength="41.27" lengthAdjust="spacingAndGlyphs" stroke="#0a0a0a" stroke-width="1.1">Read</text>
<text x="957.72" y="175.00" font-family="'Liberation Sans',sans-serif" font-size="21" fill="#e4e4e4" textLength="201.18" lengthAdjust="spacingAndGlyphs">Balance start Volt(V):</text>
<text x="969.81" y="218.00" font-family="'Liberation Sans',sans-serif" font-size="21" fill="#e4e4e4" textLength="189.28" lengthAdjust="spacingAndGlyphs">Bal start diff Volt(V):</text>
<rect x="1171" y="151" width="131" height="34" fill="#c3c3c3"/><text x="1171.08" y="176.40" font-family="'Liberation Serif',serif" font-size="31" fill="#242424">3</text><text x="1186.65" y="176.40" font-family="'Liberation Serif',serif" font-size="31" fill="#242424">,</text><text x="1201.25" y="176.40" font-family="'Liberation Serif',serif" font-size="31" fill="#242424">2</text>
<rect x="1171" y="194" width="133" height="34" fill="#c3c3c3"/><text x="1171.20" y="219.40" font-family="'Liberation Serif',serif" font-size="31" fill="#242424">0</text><text x="1186.65" y="219.40" font-family="'Liberation Serif',serif" font-size="31" fill="#242424">,</text><text x="1201.00" y="219.40" font-family="'Liberation Serif',serif" font-size="31" fill="#242424">0</text><text x="1216.15" y="219.40" font-family="'Liberation Serif',serif" font-size="31" fill="#242424">2</text>
<rect x="1320" y="172" width="79" height="38" fill="url(#btng)"/><rect x="1320.5" y="172.5" width="78" height="37" fill="none" stroke="#c0c7ce" stroke-width="1" opacity="0.3"/><text x="1338.86" y="197.40" font-family="'Liberation Sans',sans-serif" font-size="18.5" font-weight="bold" fill="#0a0a0a" textLength="41.27" lengthAdjust="spacingAndGlyphs" stroke="#0a0a0a" stroke-width="1.1">Read</text>
<text x="404.79" y="293.10" font-family="'Liberation Sans',sans-serif" font-size="21" fill="#e4e4e4" textLength="222.16" lengthAdjust="spacingAndGlyphs">Cumulative charge(Ah):</text>
<text x="381.00" y="333.10" font-family="'Liberation Sans',sans-serif" font-size="21" fill="#e4e4e4" textLength="247.64" lengthAdjust="spacingAndGlyphs">Cumulative discharge(Ah):</text>
<rect x="640" y="266" width="158" height="34" fill="#c3c3c3"/><text x="640.20" y="291.40" font-family="'Liberation Serif',serif" font-size="31" fill="#242424">8</text><text x="654.98" y="291.40" font-family="'Liberation Serif',serif" font-size="31" fill="#242424">6</text>
<rect x="640" y="310" width="158" height="34" fill="#c3c3c3"/><text x="640.20" y="335.40" font-family="'Liberation Serif',serif" font-size="31" fill="#242424">0</text>
<rect x="815" y="286" width="78" height="38" fill="url(#btng)"/><rect x="815.5" y="286.5" width="77" height="37" fill="none" stroke="#c0c7ce" stroke-width="1" opacity="0.3"/><text x="833.36" y="311.40" font-family="'Liberation Sans',sans-serif" font-size="18.5" font-weight="bold" fill="#0a0a0a" textLength="41.27" lengthAdjust="spacingAndGlyphs" stroke="#0a0a0a" stroke-width="1.1">Read</text>
<text x="1000.39" y="293.10" font-family="'Liberation Sans',sans-serif" font-size="21" fill="#e4e4e4" textLength="161.21" lengthAdjust="spacingAndGlyphs">Short Current(A):</text>
<text x="941.90" y="336.20" font-family="'Liberation Sans',sans-serif" font-size="21" fill="#e4e4e4" textLength="219.70" lengthAdjust="spacingAndGlyphs">Cur sampling Res(mΩ):</text>
<rect x="1173" y="269" width="131" height="34" fill="#c3c3c3"/><text x="1172.70" y="294.40" font-family="'Liberation Serif',serif" font-size="31" fill="#242424">1</text><text x="1187.85" y="294.40" font-family="'Liberation Serif',serif" font-size="31" fill="#242424">5</text><text x="1203.00" y="294.40" font-family="'Liberation Serif',serif" font-size="31" fill="#242424">0</text><text x="1217.90" y="294.40" font-family="'Liberation Serif',serif" font-size="31" fill="#242424">0</text>
<rect x="1173" y="313" width="132" height="34" fill="#c3c3c3"/><text x="1173.20" y="338.40" font-family="'Liberation Serif',serif" font-size="31" fill="#242424">0</text><text x="1188.65" y="338.40" font-family="'Liberation Serif',serif" font-size="31" fill="#242424">,</text><text x="1203.25" y="338.40" font-family="'Liberation Serif',serif" font-size="31" fill="#242424">2</text>
<rect x="1320" y="291" width="79" height="38" fill="url(#btng)"/><rect x="1320.5" y="291.5" width="78" height="37" fill="none" stroke="#c0c7ce" stroke-width="1" opacity="0.3"/><text x="1338.86" y="316.40" font-family="'Liberation Sans',sans-serif" font-size="18.5" font-weight="bold" fill="#0a0a0a" textLength="41.27" lengthAdjust="spacingAndGlyphs" stroke="#0a0a0a" stroke-width="1.1">Read</text>
<text x="396.71" y="427.90" font-family="'Liberation Sans',sans-serif" font-size="21" fill="#e4e4e4" textLength="231.55" lengthAdjust="spacingAndGlyphs">No. of acquisition board:</text>
<rect x="640" y="402" width="153" height="35" fill="#c3c3c3"/><text x="639.70" y="427.40" font-family="'Liberation Serif',serif" font-size="31" fill="#242424">1</text>
<text x="840.59" y="408.70" font-family="'Liberation Sans',sans-serif" font-size="21" fill="#e4e4e4" textLength="184.71" lengthAdjust="spacingAndGlyphs">Board 1˜3 Cell No.:</text>
<text x="831.98" y="453.70" font-family="'Liberation Sans',sans-serif" font-size="21" fill="#e4e4e4" textLength="193.32" lengthAdjust="spacingAndGlyphs">Board 1˜3 NTC No.:</text>
<rect x="1029" y="382" width="90" height="34" fill="#c3c3c3"/><text x="1029.78" y="407.40" font-family="'Liberation Serif',serif" font-size="31" fill="#242424" textLength="14.33" lengthAdjust="spacingAndGlyphs">4</text>
<rect x="1120" y="382" width="91" height="34" fill="#c3c3c3"/><text x="1120.20" y="407.40" font-family="'Liberation Serif',serif" font-size="31" fill="#242424">0</text>
<rect x="1212" y="382" width="90" height="34" fill="#c3c3c3"/><text x="1212.20" y="407.40" font-family="'Liberation Serif',serif" font-size="31" fill="#242424">0</text>
<rect x="1029" y="427" width="90" height="34" fill="#c3c3c3"/><text x="1028.70" y="452.40" font-family="'Liberation Serif',serif" font-size="31" fill="#242424">1</text>
<rect x="1120" y="427" width="91" height="34" fill="#c3c3c3"/><text x="1120.20" y="452.40" font-family="'Liberation Serif',serif" font-size="31" fill="#242424">0</text>
<rect x="1212" y="427" width="90" height="34" fill="#c3c3c3"/><text x="1212.20" y="452.40" font-family="'Liberation Serif',serif" font-size="31" fill="#242424">0</text>
<rect x="1320" y="398" width="79" height="39" fill="url(#btng)"/><rect x="1320.5" y="398.5" width="78" height="38" fill="none" stroke="#c0c7ce" stroke-width="1" opacity="0.3"/><text x="1338.86" y="423.90" font-family="'Liberation Sans',sans-serif" font-size="18.5" font-weight="bold" fill="#0a0a0a" textLength="41.27" lengthAdjust="spacingAndGlyphs" stroke="#0a0a0a" stroke-width="1.1">Read</text>
<text x="1472.90" y="169.40" font-family="'Liberation Sans',sans-serif" font-size="21" fill="#e4e4e4" textLength="132.79" lengthAdjust="spacingAndGlyphs">Sleep time(S):</text>
<text x="1447.81" y="218.40" font-family="'Liberation Sans',sans-serif" font-size="21" fill="#e4e4e4" textLength="157.80" lengthAdjust="spacingAndGlyphs">Current wave(A):</text>
<text x="1487.02" y="270.40" font-family="'Liberation Sans',sans-serif" font-size="21" fill="#e4e4e4" textLength="119.70" lengthAdjust="spacingAndGlyphs">Battery type:</text>
<rect x="1616" y="143" width="118" height="34" fill="#c3c3c3"/><text x="1616.08" y="168.40" font-family="'Liberation Serif',serif" font-size="31" fill="#242424">6</text><text x="1630.85" y="168.40" font-family="'Liberation Serif',serif" font-size="31" fill="#242424">5</text><text x="1645.75" y="168.40" font-family="'Liberation Serif',serif" font-size="31" fill="#242424">5</text><text x="1660.78" y="168.40" font-family="'Liberation Serif',serif" font-size="31" fill="#242424">3</text><text x="1675.55" y="168.40" font-family="'Liberation Serif',serif" font-size="31" fill="#242424">5</text>
<rect x="1616" y="194" width="118" height="34" fill="#c3c3c3"/><text x="1616.45" y="219.40" font-family="'Liberation Serif',serif" font-size="31" fill="#242424">2</text><text x="1631.65" y="219.40" font-family="'Liberation Serif',serif" font-size="31" fill="#242424">,</text><text x="1645.75" y="219.40" font-family="'Liberation Serif',serif" font-size="31" fill="#242424">5</text>
<rect x="1617" y="242" width="117" height="34" fill="#c3c3c3"/><text x="1619.00" y="267.40" font-family="'Liberation Serif',serif" font-size="31" fill="#242424" textLength="12.06" lengthAdjust="spacingAndGlyphs">i</text><text x="1634.05" y="267.40" font-family="'Liberation Serif',serif" font-size="31" fill="#242424" textLength="11.41" lengthAdjust="spacingAndGlyphs">r</text><text x="1647.00" y="267.40" font-family="'Liberation Serif',serif" font-size="31" fill="#242424">o</text><text x="1662.24" y="267.40" font-family="'Liberation Serif',serif" font-size="31" fill="#242424" textLength="14.59" lengthAdjust="spacingAndGlyphs">n</text>
<text x="1460.10" y="311.10" font-family="'Liberation Sans',sans-serif" font-size="21" fill="#e4e4e4" textLength="228.77" lengthAdjust="spacingAndGlyphs">Battery production date:</text>
<rect x="1458" y="335" width="275" height="34" fill="#c3c3c3"/><text x="1457.33" y="360.40" font-family="'Liberation Serif',serif" font-size="31" fill="#242424">S</text><text x="1473.85" y="360.40" font-family="'Liberation Serif',serif" font-size="31" fill="#242424">e</text><text x="1488.56" y="360.40" font-family="'Liberation Serif',serif" font-size="31" fill="#242424" textLength="15.12" lengthAdjust="spacingAndGlyphs">p</text><text x="1505.08" y="360.40" font-family="'Liberation Serif',serif" font-size="31" fill="#242424" textLength="10.96" lengthAdjust="spacingAndGlyphs">t</text><text x="1532.20" y="360.40" font-family="'Liberation Serif',serif" font-size="31" fill="#242424">1</text><text x="1547.48" y="360.40" font-family="'Liberation Serif',serif" font-size="31" fill="#242424">3</text><text x="1563.05" y="360.40" font-family="'Liberation Serif',serif" font-size="31" fill="#242424">,</text><text x="1577.65" y="360.40" font-family="'Liberation Serif',serif" font-size="31" fill="#242424">2</text><text x="1592.30" y="360.40" font-family="'Liberation Serif',serif" font-size="31" fill="#242424">0</text><text x="1607.45" y="360.40" font-family="'Liberation Serif',serif" font-size="31" fill="#242424">2</text><text x="1622.35" y="360.40" font-family="'Liberation Serif',serif" font-size="31" fill="#242424">2</text>
<text x="1460.11" y="409.90" font-family="'Liberation Sans',sans-serif" font-size="21" fill="#e4e4e4" textLength="228.82" lengthAdjust="spacingAndGlyphs">Battery operation mode:</text>
<rect x="1458" y="433" width="167" height="34" fill="#c3c3c3"/><text x="1458.63" y="458.40" font-family="'Liberation Serif',serif" font-size="31" fill="#242424" textLength="15.63" lengthAdjust="spacingAndGlyphs">L</text><text x="1473.10" y="458.40" font-family="'Liberation Serif',serif" font-size="31" fill="#242424">o</text><text x="1488.34" y="458.40" font-family="'Liberation Serif',serif" font-size="31" fill="#242424" textLength="14.59" lengthAdjust="spacingAndGlyphs">n</text><text x="1502.73" y="458.40" font-family="'Liberation Serif',serif" font-size="31" fill="#242424" textLength="15.12" lengthAdjust="spacingAndGlyphs">g</text><text x="1533.26" y="458.40" font-family="'Liberation Serif',serif" font-size="31" fill="#242424" textLength="15.12" lengthAdjust="spacingAndGlyphs">p</text><text x="1549.55" y="458.40" font-family="'Liberation Serif',serif" font-size="31" fill="#242424" textLength="11.41" lengthAdjust="spacingAndGlyphs">r</text><text x="1563.25" y="458.40" font-family="'Liberation Serif',serif" font-size="31" fill="#242424">e</text><text x="1578.55" y="458.40" font-family="'Liberation Serif',serif" font-size="31" fill="#242424" textLength="12.99" lengthAdjust="spacingAndGlyphs">s</text><text x="1593.45" y="458.40" font-family="'Liberation Serif',serif" font-size="31" fill="#242424" textLength="12.99" lengthAdjust="spacingAndGlyphs">s</text>
<rect x="1655" y="429" width="78" height="37" fill="url(#btng)"/><rect x="1655.5" y="429.5" width="77" height="36" fill="none" stroke="#c0c7ce" stroke-width="1" opacity="0.3"/><text x="1673.36" y="453.90" font-family="'Liberation Sans',sans-serif" font-size="18.5" font-weight="bold" fill="#0a0a0a" textLength="41.27" lengthAdjust="spacingAndGlyphs" stroke="#0a0a0a" stroke-width="1.1">Read</text>
<text x="369.37" y="522.60" font-family="'Liberation Sans',sans-serif" font-size="21" fill="#e4e4e4" textLength="186.91" lengthAdjust="spacingAndGlyphs">Firmware Index No.:</text>
<text x="429.91" y="566.60" font-family="'Liberation Sans',sans-serif" font-size="21" fill="#e4e4e4" textLength="126.37" lengthAdjust="spacingAndGlyphs">Battery code:</text>
<rect x="565" y="496" width="522" height="34" fill="#c3c3c3"/>
<rect x="565" y="545" width="522" height="34" fill="#c3c3c3"/><text x="565.45" y="570.40" font-family="'Liberation Serif',serif" font-size="31" fill="#242424">2</text><text x="580.10" y="570.40" font-family="'Liberation Serif',serif" font-size="31" fill="#242424">0</text><text x="595.25" y="570.40" font-family="'Liberation Serif',serif" font-size="31" fill="#242424">2</text><text x="610.15" y="570.40" font-family="'Liberation Serif',serif" font-size="31" fill="#242424">2</text><text x="624.80" y="570.40" font-family="'Liberation Serif',serif" font-size="31" fill="#242424">0</text><text x="639.83" y="570.40" font-family="'Liberation Serif',serif" font-size="31" fill="#242424">9</text><text x="654.10" y="570.40" font-family="'Liberation Serif',serif" font-size="31" fill="#242424">1</text><text x="669.38" y="570.40" font-family="'Liberation Serif',serif" font-size="31" fill="#242424">3</text>
<rect x="1097" y="493" width="79" height="38" fill="url(#btng)"/><rect x="1097.5" y="493.5" width="78" height="37" fill="none" stroke="#c0c7ce" stroke-width="1" opacity="0.3"/><text x="1115.86" y="518.40" font-family="'Liberation Sans',sans-serif" font-size="18.5" font-weight="bold" fill="#0a0a0a" textLength="41.27" lengthAdjust="spacingAndGlyphs" stroke="#0a0a0a" stroke-width="1.1">Read</text>
<rect x="1097" y="543" width="79" height="38" fill="url(#btng)"/><rect x="1097.5" y="543.5" width="78" height="37" fill="none" stroke="#c0c7ce" stroke-width="1" opacity="0.3"/><text x="1115.86" y="568.40" font-family="'Liberation Sans',sans-serif" font-size="18.5" font-weight="bold" fill="#0a0a0a" textLength="41.27" lengthAdjust="spacingAndGlyphs" stroke="#0a0a0a" stroke-width="1.1">Read</text>
<text x="1206.46" y="516.30" font-family="'Liberation Sans',sans-serif" font-size="21" fill="#e4e4e4" textLength="48.40" lengthAdjust="spacingAndGlyphs">RTC:</text>
<text x="1230.40" y="567.30" font-family="'Liberation Sans',sans-serif" font-size="21" fill="#e4e4e4" textLength="24.44" lengthAdjust="spacingAndGlyphs">IP:</text>
<rect x="1267" y="493" width="371" height="34" fill="#c3c3c3"/>
<rect x="1267" y="544" width="371" height="34" fill="#c3c3c3"/>
<rect x="1648" y="492" width="78" height="38" fill="url(#btng)"/><rect x="1648.5" y="492.5" width="77" height="37" fill="none" stroke="#c0c7ce" stroke-width="1" opacity="0.3"/><text x="1666.36" y="517.40" font-family="'Liberation Sans',sans-serif" font-size="18.5" font-weight="bold" fill="#0a0a0a" textLength="41.27" lengthAdjust="spacingAndGlyphs" stroke="#0a0a0a" stroke-width="1.1">Read</text>
<rect x="1648" y="543" width="78" height="38" fill="url(#btng)"/><rect x="1648.5" y="543.5" width="77" height="37" fill="none" stroke="#c0c7ce" stroke-width="1" opacity="0.3"/><text x="1666.36" y="568.40" font-family="'Liberation Sans',sans-serif" font-size="18.5" font-weight="bold" fill="#0a0a0a" textLength="41.27" lengthAdjust="spacingAndGlyphs" stroke="#0a0a0a" stroke-width="1.1">Read</text>
<text x="393.46" y="639.10" font-family="'Liberation Sans',sans-serif" font-size="21" fill="#e4e4e4" textLength="164.03" lengthAdjust="spacingAndGlyphs">BMS SW version:</text>
<text x="388.60" y="689.10" font-family="'Liberation Sans',sans-serif" font-size="21" fill="#e4e4e4" textLength="167.42" lengthAdjust="spacingAndGlyphs">WNT SW version:</text>
<rect x="571" y="614" width="330" height="34" fill="#c3c3c3"/><text x="571.08" y="639.40" font-family="'Liberation Serif',serif" font-size="31" fill="#242424">3</text><text x="586.35" y="639.40" font-family="'Liberation Serif',serif" font-size="31" fill="#242424">2</text><text x="602.25" y="639.40" font-family="'Liberation Serif',serif" font-size="31" fill="#242424" textLength="12.99" lengthAdjust="spacingAndGlyphs">_</text><text x="616.15" y="639.40" font-family="'Liberation Serif',serif" font-size="31" fill="#242424">2</text><text x="631.05" y="639.40" font-family="'Liberation Serif',serif" font-size="31" fill="#242424">2</text><text x="645.70" y="639.40" font-family="'Liberation Serif',serif" font-size="31" fill="#242424">0</text><text x="659.98" y="639.40" font-family="'Liberation Serif',serif" font-size="31" fill="#242424">7</text><text x="675.75" y="639.40" font-family="'Liberation Serif',serif" font-size="31" fill="#242424">2</text><text x="690.65" y="639.40" font-family="'Liberation Serif',serif" font-size="31" fill="#242424">2</text><text x="706.55" y="639.40" font-family="'Liberation Serif',serif" font-size="31" fill="#242424" textLength="12.99" lengthAdjust="spacingAndGlyphs">_</text><text x="719.70" y="639.40" font-family="'Liberation Serif',serif" font-size="31" fill="#242424">1</text><text x="735.10" y="639.40" font-family="'Liberation Serif',serif" font-size="31" fill="#242424">0</text><text x="750.00" y="639.40" font-family="'Liberation Serif',serif" font-size="31" fill="#242424">0</text><text x="765.57" y="639.40" font-family="'Liberation Serif',serif" font-size="31" fill="#242424" textLength="14.11" lengthAdjust="spacingAndGlyphs">T</text>
<rect x="571" y="667" width="330" height="34" fill="#c3c3c3"/>
<rect x="914" y="610" width="78" height="38" fill="url(#btng)"/><rect x="914.5" y="610.5" width="77" height="37" fill="none" stroke="#c0c7ce" stroke-width="1" opacity="0.3"/><text x="932.36" y="635.40" font-family="'Liberation Sans',sans-serif" font-size="18.5" font-weight="bold" fill="#0a0a0a" textLength="41.27" lengthAdjust="spacingAndGlyphs" stroke="#0a0a0a" stroke-width="1.1">Read</text>
<text x="1077.25" y="639.40" font-family="'Liberation Sans',sans-serif" font-size="21" fill="#e4e4e4" textLength="161.14" lengthAdjust="spacingAndGlyphs">BMS HD version:</text>
<text x="1075.40" y="687.30" font-family="'Liberation Sans',sans-serif" font-size="21" fill="#e4e4e4" textLength="162.91" lengthAdjust="spacingAndGlyphs">WNT HD version:</text>
<rect x="1249" y="614" width="331" height="34" fill="#c3c3c3"/><text x="1249.70" y="639.40" font-family="'Liberation Serif',serif" font-size="31" fill="#242424" textLength="14.99" lengthAdjust="spacingAndGlyphs">B</text><text x="1264.76" y="639.40" font-family="'Liberation Serif',serif" font-size="31" fill="#242424" textLength="14.22" lengthAdjust="spacingAndGlyphs">M</text><text x="1278.12" y="639.40" font-family="'Liberation Serif',serif" font-size="31" fill="#242424">S</text><text x="1296.53" y="639.40" font-family="'Liberation Serif',serif" font-size="31" fill="#242424">-</text><text x="1309.02" y="639.40" font-family="'Liberation Serif',serif" font-size="31" fill="#242424" textLength="14.82" lengthAdjust="spacingAndGlyphs">G</text><text x="1324.25" y="639.40" font-family="'Liberation Serif',serif" font-size="31" fill="#242424" textLength="14.64" lengthAdjust="spacingAndGlyphs">D</text><text x="1338.85" y="639.40" font-family="'Liberation Serif',serif" font-size="31" fill="#242424">2</text><text x="1353.38" y="639.40" font-family="'Liberation Serif',serif" font-size="31" fill="#242424">3</text><text x="1368.40" y="639.40" font-family="'Liberation Serif',serif" font-size="31" fill="#242424">0</text><text x="1385.92" y="639.40" font-family="'Liberation Serif',serif" font-size="31" fill="#242424">-</text><text x="1398.08" y="639.40" font-family="'Liberation Serif',serif" font-size="31" fill="#242424">3</text><text x="1413.10" y="639.40" font-family="'Liberation Serif',serif" font-size="31" fill="#242424">0</text><text x="1427.88" y="639.40" font-family="'Liberation Serif',serif" font-size="31" fill="#242424">3</text><text x="1443.34" y="639.40" font-family="'Liberation Serif',serif" font-size="31" fill="#242424" textLength="15.16" lengthAdjust="spacingAndGlyphs">E</text>
<rect x="1249" y="666" width="331" height="34" fill="#c3c3c3"/>
<rect x="1592" y="610" width="78" height="38" fill="url(#btng)"/><rect x="1592.5" y="610.5" width="77" height="37" fill="none" stroke="#c0c7ce" stroke-width="1" opacity="0.3"/><text x="1610.36" y="635.40" font-family="'Liberation Sans',sans-serif" font-size="18.5" font-weight="bold" fill="#0a0a0a" textLength="41.27" lengthAdjust="spacingAndGlyphs" stroke="#0a0a0a" stroke-width="1.1">Read</text>
<rect x="368" y="728" width="60" height="84" fill="#7f7f7f"/>
<text x="377.75" y="779.10" font-family="'Liberation Sans',sans-serif" font-size="21" fill="#f0f0f0" textLength="33.86" lengthAdjust="spacingAndGlyphs">Lev</text>
<rect x="368" y="814" width="60" height="34" fill="#7d7dfd"/>
<rect x="368" y="850" width="60" height="34" fill="#7d7dfd"/>
<rect x="368" y="886" width="60" height="39" fill="#7f7f7f"/>
<circle cx="395.2" cy="833.3" r="9.1" fill="none" stroke="#ffffff" stroke-width="1.5"/>
<text x="391.20" y="838.30" font-family="'Liberation Sans',sans-serif" font-size="13.5" fill="#ffffff" textLength="7.51" lengthAdjust="spacingAndGlyphs">1</text>
<circle cx="395.2" cy="869.3" r="9.1" fill="none" stroke="#ffffff" stroke-width="1.5"/>
<text x="391.45" y="874.30" font-family="'Liberation Sans',sans-serif" font-size="13.5" fill="#ffffff" textLength="7.51" lengthAdjust="spacingAndGlyphs">2</text>
<text x="382.22" y="911.50" font-family="'Liberation Sans',sans-serif" font-size="19" fill="#f0f0f0" textLength="27.86" lengthAdjust="spacingAndGlyphs">--&gt;</text>
<rect x="429" y="728" width="92" height="84" fill="#7f7f7f"/>
<rect x="429" y="814" width="92" height="34" fill="#c3c3c3"/>
<rect x="429" y="850" width="92" height="34" fill="#c3c3c3"/>
<text x="444.02" y="767.20" font-family="'Liberation Sans',sans-serif" font-size="17.5" fill="#eeeeee" textLength="61.27" lengthAdjust="spacingAndGlyphs">cell volt</text>
<text x="457.54" y="788.70" font-family="'Liberation Sans',sans-serif" font-size="17.5" fill="#eeeeee" textLength="34.74" lengthAdjust="spacingAndGlyphs">high</text>
<text x="428.88" y="839.10" font-family="'Liberation Serif',serif" font-size="31" fill="#242424">3</text><text x="444.45" y="839.10" font-family="'Liberation Serif',serif" font-size="31" fill="#242424">,</text><text x="458.68" y="839.10" font-family="'Liberation Serif',serif" font-size="31" fill="#242424">6</text><text x="473.45" y="839.10" font-family="'Liberation Serif',serif" font-size="31" fill="#242424">5</text>
<text x="428.88" y="875.00" font-family="'Liberation Serif',serif" font-size="31" fill="#242424">3</text><text x="444.45" y="875.00" font-family="'Liberation Serif',serif" font-size="31" fill="#242424">,</text><text x="458.68" y="875.00" font-family="'Liberation Serif',serif" font-size="31" fill="#242424">6</text><text x="473.45" y="875.00" font-family="'Liberation Serif',serif" font-size="31" fill="#242424">5</text>
<rect x="524" y="728" width="92" height="84" fill="#7f7f7f"/>
<rect x="524" y="814" width="92" height="34" fill="#c3c3c3"/>
<rect x="524" y="850" width="92" height="34" fill="#c3c3c3"/>
<text x="539.02" y="767.20" font-family="'Liberation Sans',sans-serif" font-size="17.5" fill="#eeeeee" textLength="61.27" lengthAdjust="spacingAndGlyphs">cell volt</text>
<text x="555.56" y="788.70" font-family="'Liberation Sans',sans-serif" font-size="17.5" fill="#eeeeee" textLength="27.57" lengthAdjust="spacingAndGlyphs">low</text>
<text x="524.25" y="839.10" font-family="'Liberation Serif',serif" font-size="31" fill="#242424">2</text><text x="539.45" y="839.10" font-family="'Liberation Serif',serif" font-size="31" fill="#242424">,</text><text x="553.67" y="839.10" font-family="'Liberation Serif',serif" font-size="31" fill="#242424">3</text>
<text x="524.25" y="875.00" font-family="'Liberation Serif',serif" font-size="31" fill="#242424">2</text><text x="539.45" y="875.00" font-family="'Liberation Serif',serif" font-size="31" fill="#242424">,</text><text x="553.55" y="875.00" font-family="'Liberation Serif',serif" font-size="31" fill="#242424">5</text>
<rect x="618" y="728" width="92" height="84" fill="#7f7f7f"/>
<rect x="618" y="814" width="92" height="34" fill="#c3c3c3"/>
<rect x="618" y="850" width="92" height="34" fill="#c3c3c3"/>
<text x="629.61" y="767.20" font-family="'Liberation Sans',sans-serif" font-size="17.5" fill="#eeeeee" textLength="68.42" lengthAdjust="spacingAndGlyphs">sum volt</text>
<text x="646.54" y="788.70" font-family="'Liberation Sans',sans-serif" font-size="17.5" fill="#eeeeee" textLength="34.74" lengthAdjust="spacingAndGlyphs">high</text>
<text x="617.50" y="839.10" font-family="'Liberation Serif',serif" font-size="31" fill="#242424">1</text><text x="633.48" y="839.10" font-family="'Liberation Serif',serif" font-size="31" fill="#242424" textLength="14.33" lengthAdjust="spacingAndGlyphs">4</text><text x="648.35" y="839.10" font-family="'Liberation Serif',serif" font-size="31" fill="#242424">,</text><text x="662.58" y="839.10" font-family="'Liberation Serif',serif" font-size="31" fill="#242424">6</text>
<text x="617.50" y="875.00" font-family="'Liberation Serif',serif" font-size="31" fill="#242424">1</text><text x="633.48" y="875.00" font-family="'Liberation Serif',serif" font-size="31" fill="#242424" textLength="14.33" lengthAdjust="spacingAndGlyphs">4</text><text x="648.35" y="875.00" font-family="'Liberation Serif',serif" font-size="31" fill="#242424">,</text><text x="662.58" y="875.00" font-family="'Liberation Serif',serif" font-size="31" fill="#242424">6</text>
<rect x="713" y="728" width="92" height="84" fill="#7f7f7f"/>
<rect x="713" y="814" width="92" height="34" fill="#c3c3c3"/>
<rect x="713" y="850" width="92" height="34" fill="#c3c3c3"/>
<text x="724.61" y="767.20" font-family="'Liberation Sans',sans-serif" font-size="17.5" fill="#eeeeee" textLength="68.42" lengthAdjust="spacingAndGlyphs">sum volt</text>
<text x="744.56" y="788.70" font-family="'Liberation Sans',sans-serif" font-size="17.5" fill="#eeeeee" textLength="27.57" lengthAdjust="spacingAndGlyphs">low</text>
<text x="713.12" y="839.10" font-family="'Liberation Serif',serif" font-size="31" fill="#242424">9</text><text x="728.45" y="839.10" font-family="'Liberation Serif',serif" font-size="31" fill="#242424">,</text><text x="743.05" y="839.10" font-family="'Liberation Serif',serif" font-size="31" fill="#242424">2</text>
<text x="713.00" y="875.00" font-family="'Liberation Serif',serif" font-size="31" fill="#242424">8</text><text x="728.45" y="875.00" font-family="'Liberation Serif',serif" font-size="31" fill="#242424">,</text><text x="742.80" y="875.00" font-family="'Liberation Serif',serif" font-size="31" fill="#242424">8</text>
<rect x="807" y="728" width="92" height="84" fill="#7f7f7f"/>
<rect x="807" y="814" width="92" height="34" fill="#c3c3c3"/>
<rect x="807" y="850" width="92" height="34" fill="#c3c3c3"/>
<text x="813.10" y="767.20" font-family="'Liberation Sans',sans-serif" font-size="17.5" fill="#eeeeee" textLength="79.68" lengthAdjust="spacingAndGlyphs">discharge</text>
<text x="814.15" y="788.70" font-family="'Liberation Sans',sans-serif" font-size="17.5" fill="#eeeeee" textLength="77.62" lengthAdjust="spacingAndGlyphs">curr large</text>
<text x="806.50" y="839.10" font-family="'Liberation Serif',serif" font-size="31" fill="#242424">1</text><text x="821.90" y="839.10" font-family="'Liberation Serif',serif" font-size="31" fill="#242424">8</text><text x="836.80" y="839.10" font-family="'Liberation Serif',serif" font-size="31" fill="#242424">0</text>
<text x="807.25" y="875.00" font-family="'Liberation Serif',serif" font-size="31" fill="#242424">2</text><text x="822.15" y="875.00" font-family="'Liberation Serif',serif" font-size="31" fill="#242424">2</text><text x="836.55" y="875.00" font-family="'Liberation Serif',serif" font-size="31" fill="#242424">5</text>
<rect x="902" y="728" width="92" height="84" fill="#7f7f7f"/>
<rect x="902" y="814" width="92" height="34" fill="#c3c3c3"/>
<rect x="902" y="850" width="92" height="34" fill="#c3c3c3"/>
<text x="919.91" y="767.20" font-family="'Liberation Sans',sans-serif" font-size="17.5" fill="#eeeeee" textLength="56.19" lengthAdjust="spacingAndGlyphs">charge</text>
<text x="909.15" y="788.70" font-family="'Liberation Sans',sans-serif" font-size="17.5" fill="#eeeeee" textLength="77.62" lengthAdjust="spacingAndGlyphs">curr large</text>
<text x="901.50" y="839.10" font-family="'Liberation Serif',serif" font-size="31" fill="#242424">1</text><text x="916.90" y="839.10" font-family="'Liberation Serif',serif" font-size="31" fill="#242424">8</text><text x="931.80" y="839.10" font-family="'Liberation Serif',serif" font-size="31" fill="#242424">0</text>
<text x="902.25" y="875.00" font-family="'Liberation Serif',serif" font-size="31" fill="#242424">2</text><text x="917.15" y="875.00" font-family="'Liberation Serif',serif" font-size="31" fill="#242424">2</text><text x="931.55" y="875.00" font-family="'Liberation Serif',serif" font-size="31" fill="#242424">5</text>
<rect x="996" y="728" width="92" height="84" fill="#7f7f7f"/>
<rect x="996" y="814" width="92" height="34" fill="#c3c3c3"/>
<rect x="996" y="850" width="92" height="34" fill="#c3c3c3"/>
<text x="1012.99" y="767.20" font-family="'Liberation Sans',sans-serif" font-size="17.5" fill="#eeeeee" textLength="57.89" lengthAdjust="spacingAndGlyphs">volt diff</text>
<text x="1021.26" y="788.70" font-family="'Liberation Sans',sans-serif" font-size="17.5" fill="#eeeeee" textLength="40.86" lengthAdjust="spacingAndGlyphs">large</text>
<text x="996.00" y="839.10" font-family="'Liberation Serif',serif" font-size="31" fill="#242424">0</text><text x="1011.45" y="839.10" font-family="'Liberation Serif',serif" font-size="31" fill="#242424">,</text><text x="1025.55" y="839.10" font-family="'Liberation Serif',serif" font-size="31" fill="#242424">5</text>
<text x="996.00" y="875.00" font-family="'Liberation Serif',serif" font-size="31" fill="#242424">0</text><text x="1011.45" y="875.00" font-family="'Liberation Serif',serif" font-size="31" fill="#242424">,</text><text x="1026.05" y="875.00" font-family="'Liberation Serif',serif" font-size="31" fill="#242424">2</text><text x="1040.45" y="875.00" font-family="'Liberation Serif',serif" font-size="31" fill="#242424">5</text>
<rect x="1090" y="728" width="92" height="84" fill="#7f7f7f"/>
<rect x="1090" y="814" width="92" height="34" fill="#c3c3c3"/>
<rect x="1090" y="850" width="92" height="34" fill="#c3c3c3"/>
<text x="1100.69" y="767.20" font-family="'Liberation Sans',sans-serif" font-size="17.5" fill="#eeeeee" textLength="70.14" lengthAdjust="spacingAndGlyphs">temp diff</text>
<text x="1115.26" y="788.70" font-family="'Liberation Sans',sans-serif" font-size="17.5" fill="#eeeeee" textLength="40.86" lengthAdjust="spacingAndGlyphs">large</text>
<text x="1089.50" y="839.10" font-family="'Liberation Serif',serif" font-size="31" fill="#242424">1</text><text x="1104.90" y="839.10" font-family="'Liberation Serif',serif" font-size="31" fill="#242424">0</text>
<text x="1089.50" y="875.00" font-family="'Liberation Serif',serif" font-size="31" fill="#242424">1</text><text x="1104.65" y="875.00" font-family="'Liberation Serif',serif" font-size="31" fill="#242424">5</text>
<rect x="1185" y="728" width="92" height="84" fill="#7f7f7f"/>
<rect x="1185" y="814" width="92" height="34" fill="#c3c3c3"/>
<rect x="1185" y="850" width="92" height="34" fill="#c3c3c3"/>
<text x="1191.23" y="779.00" font-family="'Liberation Sans',sans-serif" font-size="17.5" fill="#eeeeee" textLength="79.67" lengthAdjust="spacingAndGlyphs">SOC high</text>
<text x="1184.50" y="839.10" font-family="'Liberation Serif',serif" font-size="31" fill="#242424">1</text><text x="1199.90" y="839.10" font-family="'Liberation Serif',serif" font-size="31" fill="#242424">0</text><text x="1214.80" y="839.10" font-family="'Liberation Serif',serif" font-size="31" fill="#242424">0</text>
<text x="1184.50" y="875.00" font-family="'Liberation Serif',serif" font-size="31" fill="#242424">1</text><text x="1199.90" y="875.00" font-family="'Liberation Serif',serif" font-size="31" fill="#242424">0</text><text x="1215.05" y="875.00" font-family="'Liberation Serif',serif" font-size="31" fill="#242424">2</text>
<rect x="1279" y="728" width="92" height="84" fill="#7f7f7f"/>
<rect x="1279" y="814" width="92" height="34" fill="#c3c3c3"/>
<rect x="1279" y="850" width="92" height="34" fill="#c3c3c3"/>
<text x="1288.25" y="779.00" font-family="'Liberation Sans',sans-serif" font-size="17.5" fill="#eeeeee" textLength="72.50" lengthAdjust="spacingAndGlyphs">SOC low</text>
<text x="1279.25" y="839.10" font-family="'Liberation Serif',serif" font-size="31" fill="#242424">2</text><text x="1293.90" y="839.10" font-family="'Liberation Serif',serif" font-size="31" fill="#242424">0</text>
<text x="1278.50" y="875.00" font-family="'Liberation Serif',serif" font-size="31" fill="#242424">1</text><text x="1293.90" y="875.00" font-family="'Liberation Serif',serif" font-size="31" fill="#242424">0</text>
<rect x="1374" y="728" width="92" height="84" fill="#7f7f7f"/>
<rect x="1374" y="814" width="92" height="34" fill="#c3c3c3"/>
<rect x="1374" y="850" width="92" height="34" fill="#c3c3c3"/>
<text x="1391.91" y="756.50" font-family="'Liberation Sans',sans-serif" font-size="17.5" fill="#eeeeee" textLength="56.19" lengthAdjust="spacingAndGlyphs">charge</text>
<text x="1399.79" y="778.80" font-family="'Liberation Sans',sans-serif" font-size="17.5" fill="#eeeeee" textLength="40.86" lengthAdjust="spacingAndGlyphs">temp</text>
<text x="1402.54" y="801.00" font-family="'Liberation Sans',sans-serif" font-size="17.5" fill="#eeeeee" textLength="34.74" lengthAdjust="spacingAndGlyphs">high</text>
<text x="1373.75" y="839.10" font-family="'Liberation Serif',serif" font-size="31" fill="#242424">5</text><text x="1388.65" y="839.10" font-family="'Liberation Serif',serif" font-size="31" fill="#242424">5</text>
<text x="1374.58" y="875.00" font-family="'Liberation Serif',serif" font-size="31" fill="#242424" textLength="14.33" lengthAdjust="spacingAndGlyphs">4</text><text x="1388.65" y="875.00" font-family="'Liberation Serif',serif" font-size="31" fill="#242424">5</text>
<rect x="1468" y="728" width="92" height="84" fill="#7f7f7f"/>
<rect x="1468" y="814" width="92" height="34" fill="#c3c3c3"/>
<rect x="1468" y="850" width="92" height="34" fill="#c3c3c3"/>
<text x="1485.91" y="767.20" font-family="'Liberation Sans',sans-serif" font-size="17.5" fill="#eeeeee" textLength="56.19" lengthAdjust="spacingAndGlyphs">charge</text>
<text x="1476.99" y="788.70" font-family="'Liberation Sans',sans-serif" font-size="17.5" fill="#eeeeee" textLength="73.53" lengthAdjust="spacingAndGlyphs">temp low</text>
<text x="1467.66" y="839.10" font-family="'Liberation Serif',serif" font-size="31" fill="#242424" textLength="16.17" lengthAdjust="spacingAndGlyphs">−</text><text x="1482.78" y="839.10" font-family="'Liberation Serif',serif" font-size="31" fill="#242424">3</text><text x="1497.55" y="839.10" font-family="'Liberation Serif',serif" font-size="31" fill="#242424">5</text>
<text x="1468.00" y="875.00" font-family="'Liberation Serif',serif" font-size="31" fill="#242424">0</text>
<rect x="1563" y="728" width="92" height="84" fill="#7f7f7f"/>
<rect x="1563" y="814" width="92" height="34" fill="#c3c3c3"/>
<rect x="1563" y="850" width="92" height="34" fill="#c3c3c3"/>
<text x="1569.10" y="756.50" font-family="'Liberation Sans',sans-serif" font-size="17.5" fill="#eeeeee" textLength="79.68" lengthAdjust="spacingAndGlyphs">discharge</text>
<text x="1588.79" y="778.80" font-family="'Liberation Sans',sans-serif" font-size="17.5" fill="#eeeeee" textLength="40.86" lengthAdjust="spacingAndGlyphs">temp</text>
<text x="1591.54" y="801.00" font-family="'Liberation Sans',sans-serif" font-size="17.5" fill="#eeeeee" textLength="34.74" lengthAdjust="spacingAndGlyphs">high</text>
<text x="1562.88" y="839.10" font-family="'Liberation Serif',serif" font-size="31" fill="#242424">6</text><text x="1577.65" y="839.10" font-family="'Liberation Serif',serif" font-size="31" fill="#242424">5</text>
<text x="1563.58" y="875.00" font-family="'Liberation Serif',serif" font-size="31" fill="#242424" textLength="14.33" lengthAdjust="spacingAndGlyphs">4</text><text x="1577.65" y="875.00" font-family="'Liberation Serif',serif" font-size="31" fill="#242424">5</text>
<rect x="1657" y="728" width="92" height="84" fill="#7f7f7f"/>
<rect x="1657" y="814" width="92" height="34" fill="#c3c3c3"/>
<rect x="1657" y="850" width="92" height="34" fill="#c3c3c3"/>
<text x="1663.10" y="767.20" font-family="'Liberation Sans',sans-serif" font-size="17.5" fill="#eeeeee" textLength="79.68" lengthAdjust="spacingAndGlyphs">discharge</text>
<text x="1665.99" y="788.70" font-family="'Liberation Sans',sans-serif" font-size="17.5" fill="#eeeeee" textLength="73.53" lengthAdjust="spacingAndGlyphs">temp low</text>
<text x="1656.66" y="839.10" font-family="'Liberation Serif',serif" font-size="31" fill="#242424" textLength="16.17" lengthAdjust="spacingAndGlyphs">−</text><text x="1671.78" y="839.10" font-family="'Liberation Serif',serif" font-size="31" fill="#242424">3</text><text x="1686.55" y="839.10" font-family="'Liberation Serif',serif" font-size="31" fill="#242424">5</text>
<text x="1656.66" y="875.00" font-family="'Liberation Serif',serif" font-size="31" fill="#242424" textLength="16.17" lengthAdjust="spacingAndGlyphs">−</text><text x="1672.15" y="875.00" font-family="'Liberation Serif',serif" font-size="31" fill="#242424">2</text><text x="1686.80" y="875.00" font-family="'Liberation Serif',serif" font-size="31" fill="#242424">0</text>
<rect x="429" y="886.5" width="91" height="38" fill="url(#btng)"/><rect x="429.5" y="887.0" width="90" height="37" fill="none" stroke="#c0c7ce" stroke-width="1" opacity="0.3"/><text x="453.86" y="911.90" font-family="'Liberation Sans',sans-serif" font-size="18.5" font-weight="bold" fill="#0a0a0a" textLength="41.27" lengthAdjust="spacingAndGlyphs" stroke="#0a0a0a" stroke-width="1.1">Read</text>
<rect x="618" y="886.5" width="91" height="38" fill="url(#btng)"/><rect x="618.5" y="887.0" width="90" height="37" fill="none" stroke="#c0c7ce" stroke-width="1" opacity="0.3"/><text x="642.86" y="911.90" font-family="'Liberation Sans',sans-serif" font-size="18.5" font-weight="bold" fill="#0a0a0a" textLength="41.27" lengthAdjust="spacingAndGlyphs" stroke="#0a0a0a" stroke-width="1.1">Read</text>
<rect x="807" y="886.5" width="91" height="38" fill="url(#btng)"/><rect x="807.5" y="887.0" width="90" height="37" fill="none" stroke="#c0c7ce" stroke-width="1" opacity="0.3"/><text x="831.86" y="911.90" font-family="'Liberation Sans',sans-serif" font-size="18.5" font-weight="bold" fill="#0a0a0a" textLength="41.27" lengthAdjust="spacingAndGlyphs" stroke="#0a0a0a" stroke-width="1.1">Read</text>
<rect x="996" y="886.5" width="91" height="38" fill="url(#btng)"/><rect x="996.5" y="887.0" width="90" height="37" fill="none" stroke="#c0c7ce" stroke-width="1" opacity="0.3"/><text x="1020.86" y="911.90" font-family="'Liberation Sans',sans-serif" font-size="18.5" font-weight="bold" fill="#0a0a0a" textLength="41.27" lengthAdjust="spacingAndGlyphs" stroke="#0a0a0a" stroke-width="1.1">Read</text>
<rect x="1185" y="886.5" width="91" height="38" fill="url(#btng)"/><rect x="1185.5" y="887.0" width="90" height="37" fill="none" stroke="#c0c7ce" stroke-width="1" opacity="0.3"/><text x="1209.86" y="911.90" font-family="'Liberation Sans',sans-serif" font-size="18.5" font-weight="bold" fill="#0a0a0a" textLength="41.27" lengthAdjust="spacingAndGlyphs" stroke="#0a0a0a" stroke-width="1.1">Read</text>
<rect x="1374" y="886.5" width="186" height="37" fill="url(#btng)"/><rect x="1374.5" y="887.0" width="185" height="36" fill="none" stroke="#c0c7ce" stroke-width="1" opacity="0.3"/><text x="1446.36" y="911.40" font-family="'Liberation Sans',sans-serif" font-size="18.5" font-weight="bold" fill="#0a0a0a" textLength="41.27" lengthAdjust="spacingAndGlyphs" stroke="#0a0a0a" stroke-width="1.1">Read</text>
<rect x="1592" y="961" width="176" height="43" fill="url(#btng)"/>
<g stroke="#111111" stroke-width="0.4"><text x="1638.95" y="992.00" font-family="'Liberation Serif',serif" font-size="20" fill="#111111" textLength="10.67" lengthAdjust="spacingAndGlyphs">R</text><text x="1650.85" y="992.00" font-family="'Liberation Serif',serif" font-size="20" fill="#111111">e</text><text x="1661.50" y="992.00" font-family="'Liberation Serif',serif" font-size="20" fill="#111111">a</text><text x="1671.90" y="992.00" font-family="'Liberation Serif',serif" font-size="20" fill="#111111">d</text><text x="1693.67" y="992.00" font-family="'Liberation Serif',serif" font-size="20" fill="#111111" textLength="10.52" lengthAdjust="spacingAndGlyphs">A</text><text x="1706.11" y="992.00" font-family="'Liberation Serif',serif" font-size="20" fill="#111111" textLength="7.56" lengthAdjust="spacingAndGlyphs">l</text><text x="1717.01" y="992.00" font-family="'Liberation Serif',serif" font-size="20" fill="#111111" textLength="7.56" lengthAdjust="spacingAndGlyphs">l</text></g>
</svg></body></html>
